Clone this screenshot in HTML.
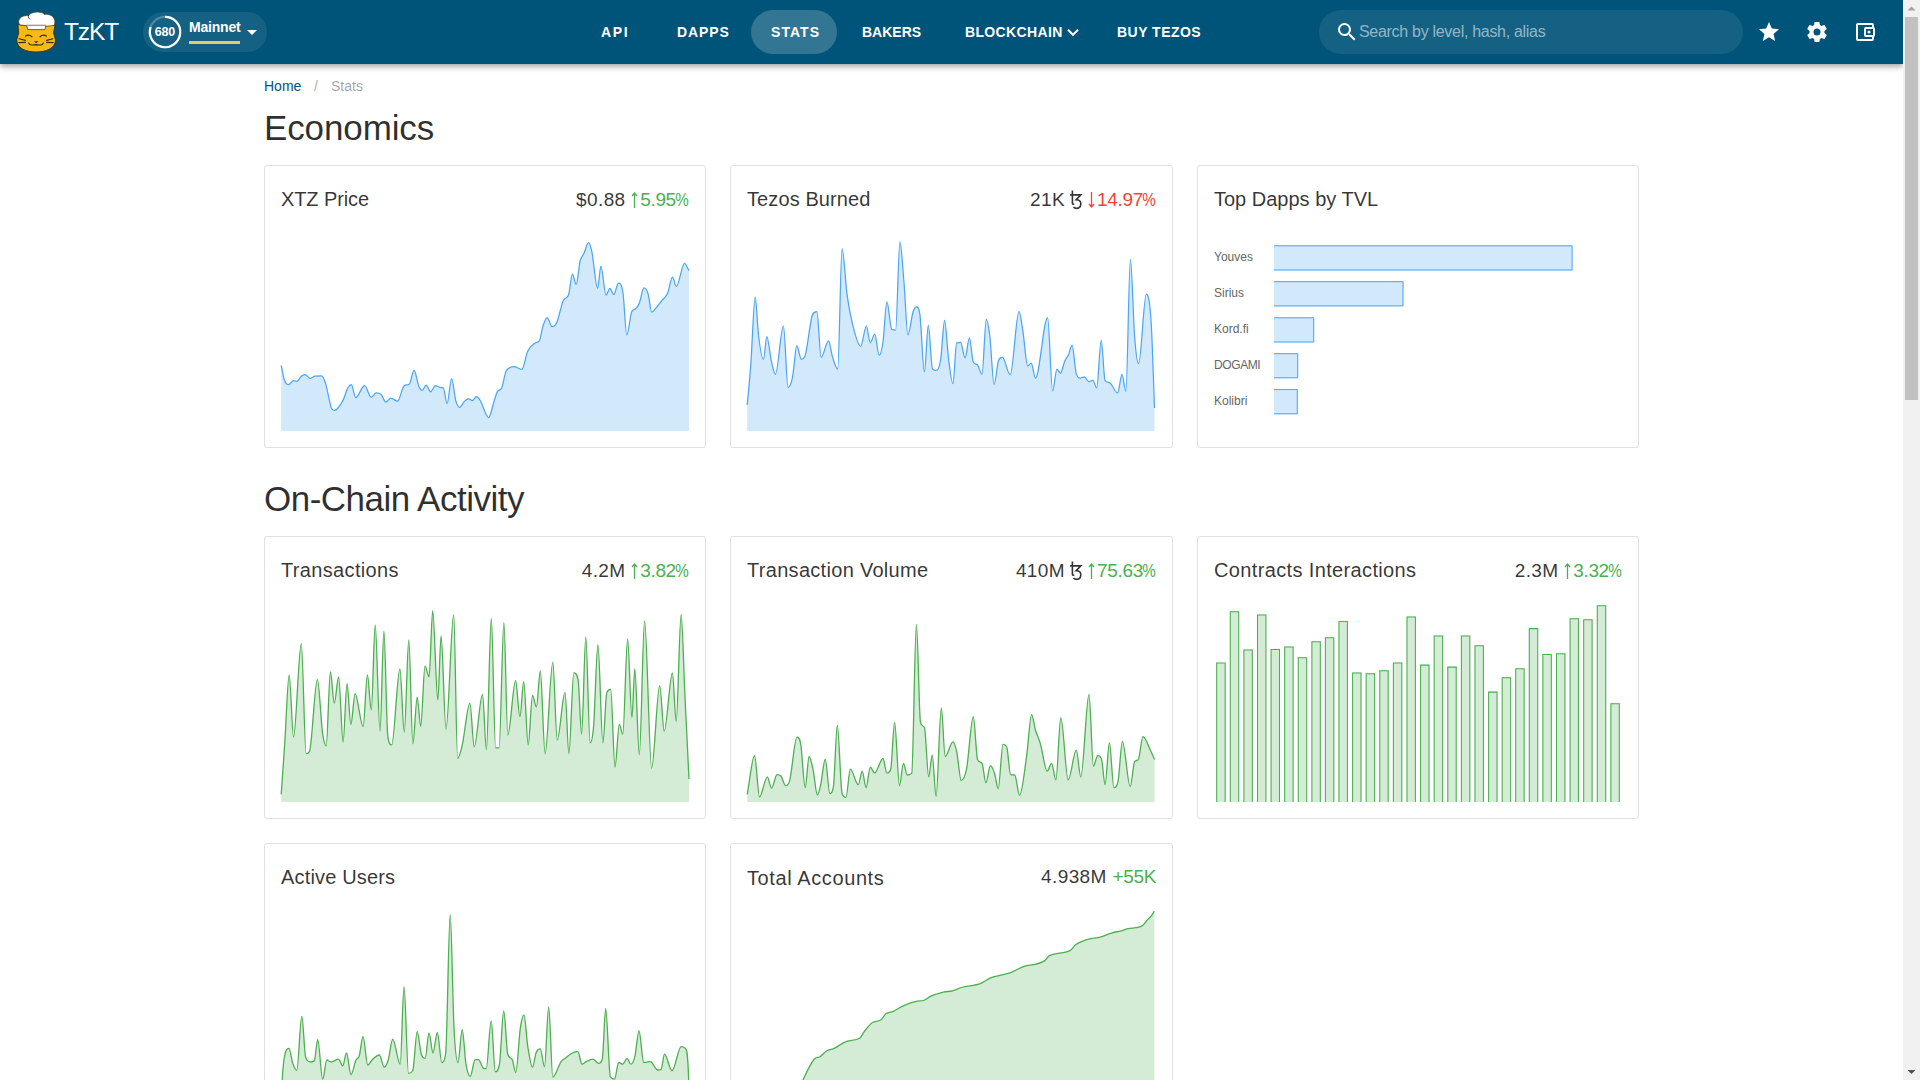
<!DOCTYPE html>
<html><head><meta charset="utf-8">
<style>
*{box-sizing:border-box;margin:0;padding:0}
html,body{width:1920px;height:1080px;overflow:hidden;background:#fff;font-family:"Liberation Sans",sans-serif;color:rgba(0,0,0,.87)}
#hdr{position:absolute;left:0;top:0;width:1903px;height:64px;background:#015479;box-shadow:0 2px 4px -1px rgba(0,0,0,.2),0 4px 5px 0 rgba(0,0,0,.14),0 1px 10px 0 rgba(0,0,0,.12);z-index:5}
.abs{position:absolute}
.nav{position:absolute;top:0;height:64px;line-height:64px;color:#fff;font-weight:bold;font-size:14px;letter-spacing:.9px;white-space:nowrap}
#sb{position:absolute;left:1903px;top:0;width:17px;height:1080px;background:#f1f1f1;z-index:6}
.card{position:absolute;border:1px solid #e0e0e0;border-radius:3px;background:#fff;width:442px}
.ct{position:absolute;left:16px;top:22px;font-size:20px;line-height:23px;color:rgba(0,0,0,.8);white-space:nowrap;letter-spacing:0}
.cv{position:absolute;right:16px;top:23px;font-size:19px;line-height:21px;color:rgba(0,0,0,.8);white-space:nowrap;letter-spacing:.4px}
.up,.dn{letter-spacing:-.35px}
.pc{font-style:normal;display:inline-block;transform:scaleX(.8);transform-origin:100% 50%;margin-left:-3.4px}
.up{color:#4caf50}
.dn{color:#f44336}
.ar{display:inline-block;vertical-align:top;width:7px;height:16px;position:relative;top:3px;margin-right:2px}
.tz{display:inline-block;vertical-align:top;width:11px;height:19px;position:relative;top:1px;margin:0 7px 0 5px}
h4{position:absolute;font-weight:normal;font-size:35px;color:rgba(0,0,0,.82);white-space:nowrap;letter-spacing:.1px}
svg{overflow:visible}
</style></head><body>
<div id="hdr">
  <svg class="abs" style="left:10px;top:6px" width="52" height="52" viewBox="0 0 1080 1080">
    <path d="M165 385 L180 560 L140 700 C140 880 330 955 540 955 C750 955 945 880 945 700 L905 560 L935 400 L700 415 L380 415 Z" fill="#f9b915" stroke="#3b2a0a" stroke-width="18" stroke-linejoin="round"/>
    <path d="M200 390 C140 300 220 190 380 200 C440 110 660 100 720 175 C860 150 980 270 915 405 L745 420 L345 410 Z" fill="#fff" stroke="#3b2a0a" stroke-width="12" stroke-linejoin="round"/>
    <path d="M345 400 H745 L725 490 H370 Z" fill="#fff" stroke="#3b2a0a" stroke-width="14" stroke-linejoin="round"/>
    <path d="M345 405 H745" stroke="#9a9a9a" stroke-width="20"/>
    <path d="M385 190 Q370 250 415 280" fill="none" stroke="#3b2a0a" stroke-width="16"/>
    <g fill="none" stroke="#3b2a0a" stroke-width="26" stroke-linecap="round">
      <path d="M325 625 Q390 580 455 640"/><path d="M625 640 Q690 580 755 625"/>
      <path d="M390 770 Q410 830 540 800 Q670 830 690 770"/>
      <path d="M190 680 L320 715"/><path d="M185 760 L320 755"/><path d="M760 715 L890 680"/><path d="M760 755 L895 760"/>
    </g>
    <path d="M500 730 H590 L545 775 Z" fill="#3b2a0a"/>
  </svg>
  <div class="abs" style="left:64px;top:0;height:64px;line-height:64px;color:#fff;font-size:24.5px;letter-spacing:-1.1px">TzKT</div>
  <div class="abs" style="left:143px;top:12px;width:124px;height:40px;border-radius:20px;background:rgba(255,255,255,.08)"></div>
  <svg class="abs" style="left:147px;top:15px" width="36" height="36" viewBox="0 0 36 36">
    <circle cx="18" cy="17" r="15.2" fill="none" stroke="rgba(255,255,255,.25)" stroke-width="2.2"/>
    <path d="M18 1.8 A15.2 15.2 0 1 1 3.6 12.2" fill="none" stroke="#fff" stroke-width="2.2"/>
    <text x="18" y="21.3" text-anchor="middle" font-family="Liberation Sans" font-weight="bold" font-size="12.5" fill="#fff" letter-spacing="-.2">680</text>
  </svg>
  <div class="abs" style="left:189px;top:19px;color:#fff;font-weight:bold;font-size:14px;line-height:16px;letter-spacing:-.2px">Mainnet</div>
  <div class="abs" style="left:189px;top:41px;width:51px;height:3px;background:#e2cb72"></div>
  <svg class="abs" style="left:240px;top:20px" width="24" height="24" viewBox="0 0 24 24"><path d="M7 10L12 15L17 10H7Z" fill="#fff"/></svg>
  <div class="nav" style="left:601px;letter-spacing:1.6px">API</div>
  <div class="nav" style="left:677px">DAPPS</div>
  <div class="abs" style="left:751px;top:10px;width:86px;height:44px;border-radius:22px;background:rgba(255,255,255,.2)"></div>
  <div class="nav" style="left:771px;letter-spacing:1.05px">STATS</div>
  <div class="nav" style="left:862px;letter-spacing:0">BAKERS</div>
  <div class="nav" style="left:965px;letter-spacing:.35px">BLOCKCHAIN</div>
  <svg class="abs" style="left:0;top:0" width="1903" height="64"><path d="M1068 29.8L1073 34.8L1078 29.8" fill="none" stroke="#fff" stroke-width="2"/></svg>
  <div class="nav" style="left:1117px;letter-spacing:.48px">BUY TEZOS</div>
  <div class="abs" style="left:1319px;top:10px;width:424px;height:44px;border-radius:22px;background:rgba(255,255,255,.08)"></div>
  <svg class="abs" style="left:1335px;top:20px" width="24" height="24" viewBox="0 0 24 24"><path d="M9.5,3A6.5,6.5 0 0,1 16,9.5C16,11.11 15.41,12.59 14.44,13.73L14.71,14H15.5L20.5,19L19,20.5L14,15.5V14.71L13.730,14.44C12.59,15.41 11.11,16 9.5,16A6.5,6.5 0 0,1 3,9.5A6.5,6.5 0 0,1 9.5,3M9.5,5C7,5 5,7 5,9.5C5,12 7,14 9.5,14C12,14 14,12 14,9.5C14,7 12,5 9.5,5Z" fill="#fff"/></svg>
  <div class="abs" style="left:1359px;top:0;height:64px;line-height:64px;font-size:16px;color:rgba(255,255,255,.55);letter-spacing:-.3px">Search by level, hash, alias</div>
  <svg class="abs" style="left:1757px;top:20px" width="24" height="24" viewBox="0 0 24 24"><path d="M12,17.27L18.18,21L16.54,13.97L22,9.24L14.81,8.62L12,2L9.19,8.62L2,9.24L7.45,13.97L5.82,21L12,17.27Z" fill="#fff"/></svg>
  <svg class="abs" style="left:1805px;top:20px" width="24" height="24" viewBox="0 0 24 24"><path d="M12,15.5A3.5,3.5 0 0,1 8.5,12A3.5,3.5 0 0,1 12,8.5A3.5,3.5 0 0,1 15.5,12A3.5,3.5 0 0,1 12,15.5M19.43,12.97C19.47,12.65 19.5,12.33 19.5,12C19.5,11.67 19.47,11.34 19.43,11L21.54,9.37C21.73,9.22 21.78,8.95 21.66,8.73L19.66,5.27C19.54,5.05 19.27,4.96 19.05,5.05L16.56,6.05C16.04,5.66 15.5,5.32 14.87,5.07L14.5,2.42C14.46,2.18 14.25,2 14,2H10C9.75,2 9.54,2.18 9.5,2.42L9.13,5.07C8.5,5.32 7.960,5.66 7.44,6.05L4.95,5.05C4.73,4.96 4.46,5.05 4.34,5.27L2.34,8.73C2.21,8.95 2.27,9.22 2.46,9.37L4.57,11C4.53,11.34 4.5,11.67 4.5,12C4.5,12.33 4.53,12.65 4.57,12.97L2.46,14.63C2.27,14.78 2.21,15.05 2.34,15.27L4.34,18.73C4.46,18.95 4.73,19.03 4.95,18.95L7.44,17.94C7.96,18.34 8.5,18.68 9.13,18.93L9.5,21.58C9.54,21.82 9.75,22 10,22H14C14.25,22 14.46,21.82 14.5,21.58L14.87,18.93C15.5,18.67 16.04,18.34 16.56,17.94L19.050,18.95C19.27,19.03 19.54,18.95 19.66,18.73L21.66,15.27C21.78,15.05 21.73,14.78 21.54,14.63L19.43,12.97Z" fill="#fff"/></svg>
  <svg class="abs" style="left:1853px;top:20px" width="24" height="24" viewBox="0 0 24 24"><path d="M5,3C3.89,3 3,3.9 3,5V19A2,2 0 0,0 5,21H19A2,2 0 0,0 21,19V16.72C21.59,16.37 22,15.74 22,15V9C22,8.26 21.59,7.63 21,7.28V5A2,2 0 0,0 19,3H5M5,5H19V7H13A2,2 0 0,0 11,9V15A2,2 0 0,0 13,17H19V19H5V5M13,9H20V15H13V9M16,10.5A1.5,1.5 0 0,0 14.5,12A1.5,1.5 0 0,0 16,13.5A1.5,1.5 0 0,0 17.5,12A1.5,1.5 0 0,0 16,10.5Z" fill="#fff"/></svg>
</div>
<div id="sb">
  <svg class="abs" style="left:0;top:0" width="17" height="1080"><path d="M4.5 10.5H12.5L8.5 6.5Z" fill="#a3a3a3"/><rect x="2" y="17" width="13" height="383" fill="#c1c1c1"/><path d="M4.5 1070H12.5L8.5 1074Z" fill="#505050"/></svg>
</div>

<div class="abs" style="left:264px;top:78px;font-size:14px;line-height:16px;color:#01547c">Home</div>
<div class="abs" style="left:314px;top:78px;font-size:14px;line-height:16px;color:rgba(0,0,0,.38)">/</div>
<div class="abs" style="left:331px;top:78px;font-size:14px;line-height:16px;color:rgba(0,0,0,.38)">Stats</div>

<h4 style="left:264px;top:108px;letter-spacing:-.12px">Economics</h4>

<div class="card" style="left:264px;top:165px;height:283px">
  <div class="ct" style="letter-spacing:-.1px">XTZ Price</div>
  <div class="cv">$0.88 <span class="up"><svg class="ar" viewBox="0 0 7 16"><path d="M3.5 16V1.2M1 4L3.5 1L6 4" fill="none" stroke="currentColor" stroke-width="1.3"/></svg>5.95<i class="pc">%</i></span></div>
</div>
<div class="card" style="left:730px;top:165px;height:283px;width:443px">
  <div class="ct" style="letter-spacing:.1px">Tezos Burned</div>
  <div class="cv">21K<svg class="tz" viewBox="0 0 11 19"><path d="M2.4 0.6V13.2Q2.4 14.3 4.3 14.2M0.1 4.9H10.8L6.2 9.7Q10.8 9.7 10.8 13.6Q10.8 18.4 6.7 18.4Q4.7 18.4 3.4 17.2" fill="none" stroke="currentColor" stroke-width="1.6"/></svg><span class="dn"><svg class="ar" viewBox="0 0 7 16"><path d="M3.5 0V14.8M1 12L3.5 15L6 12" fill="none" stroke="currentColor" stroke-width="1.3"/></svg>14.97<i class="pc">%</i></span></div>
</div>
<div class="card" style="left:1197px;top:165px;height:283px">
  <div class="ct">Top Dapps by TVL</div>
</div>

<h4 style="left:264px;top:479px;letter-spacing:-.5px">On-Chain Activity</h4>

<div class="card" style="left:264px;top:536px;height:283px">
  <div class="ct" style="letter-spacing:.34px">Transactions</div>
  <div class="cv">4.2M <span class="up"><svg class="ar" viewBox="0 0 7 16"><path d="M3.5 16V1.2M1 4L3.5 1L6 4" fill="none" stroke="currentColor" stroke-width="1.3"/></svg>3.82<i class="pc">%</i></span></div>
</div>
<div class="card" style="left:730px;top:536px;height:283px;width:443px">
  <div class="ct" style="letter-spacing:.3px">Transaction Volume</div>
  <div class="cv">410M<svg class="tz" viewBox="0 0 11 19"><path d="M2.4 0.6V13.2Q2.4 14.3 4.3 14.2M0.1 4.9H10.8L6.2 9.7Q10.8 9.7 10.8 13.6Q10.8 18.4 6.7 18.4Q4.7 18.4 3.4 17.2" fill="none" stroke="currentColor" stroke-width="1.6"/></svg><span class="up"><svg class="ar" viewBox="0 0 7 16"><path d="M3.5 16V1.2M1 4L3.5 1L6 4" fill="none" stroke="currentColor" stroke-width="1.3"/></svg>75.63<i class="pc">%</i></span></div>
</div>
<div class="card" style="left:1197px;top:536px;height:283px">
  <div class="ct" style="letter-spacing:.36px">Contracts Interactions</div>
  <div class="cv">2.3M <span class="up"><svg class="ar" viewBox="0 0 7 16"><path d="M3.5 16V1.2M1 4L3.5 1L6 4" fill="none" stroke="currentColor" stroke-width="1.3"/></svg>3.32<i class="pc">%</i></span></div>
</div>

<div class="card" style="left:264px;top:843px;height:283px">
  <div class="ct" style="letter-spacing:.17px">Active Users</div>
</div>
<div class="card" style="left:730px;top:843px;height:283px;width:443px">
  <div class="ct" style="top:23px;letter-spacing:.6px">Total Accounts</div>
  <div class="cv" style="top:22px">4.938M <span class="up">+55K</span></div>
</div>
<svg id="charts" width="1920" height="1080" style="position:absolute;left:0;top:0" viewBox="0 0 1920 1080"><path d="M281.2 365.5C282.4 370.6 283.5 377.6 284.7 380.7C286.0 384.2 287.3 384.6 288.6 384.6C290.2 384.6 291.9 380.7 293.5 380.7C294.7 380.7 295.8 381.3 297.0 381.3C298.4 381.3 299.9 377.4 301.3 376.2C302.6 375.1 303.9 374.5 305.2 374.5C306.8 374.5 308.4 378.4 310.0 378.4C311.6 378.4 313.3 376.5 314.9 376.2C317.2 375.8 319.4 375.8 321.7 375.8C323.0 375.8 324.3 379.6 325.6 383.6C327.5 389.6 329.5 403.0 331.4 407.9C332.4 410.3 333.3 410.4 334.3 410.4C337.2 410.4 340.2 405.6 343.1 400.1C344.7 397.0 346.4 390.3 348.0 387.5C349.1 385.6 350.3 384.6 351.4 384.6C352.8 384.6 354.3 397.6 355.7 397.6C358.6 397.6 361.6 385.6 364.5 385.6C366.8 385.6 369.0 397.2 371.3 397.2C372.9 397.2 374.5 392.9 376.1 392.9C377.7 392.9 379.4 392.9 381.0 394.3C382.6 395.7 384.3 402.1 385.9 402.1C387.5 402.1 389.1 398.2 390.7 398.2C393.0 398.2 395.2 401.1 397.5 401.1C399.8 401.1 402.0 386.8 404.3 385.6C405.9 384.7 407.6 385.3 409.2 384.2C410.8 383.1 412.5 370.4 414.1 370.4C415.7 370.4 417.3 382.9 418.9 386.5C420.0 389.0 421.1 390.4 422.2 390.4C423.5 390.4 424.8 385.0 426.1 385.0C427.6 385.0 429.1 391.8 430.6 391.8C432.2 391.8 433.8 385.6 435.4 385.6C437.0 385.6 438.7 387.5 440.3 387.5C441.3 387.5 442.2 387.5 443.2 387.5C444.5 387.5 445.8 403.6 447.1 403.6C448.6 403.6 450.1 378.7 451.6 378.7C453.0 378.7 454.5 396.2 455.9 401.1C457.2 405.4 458.4 407.3 459.7 407.3C461.3 407.3 463.0 402.6 464.6 401.1C465.9 399.9 467.2 398.8 468.5 398.8C469.8 398.8 471.1 400.5 472.4 400.5C473.7 400.5 475.0 396.6 476.3 396.6C477.6 396.6 478.9 398.5 480.2 400.5C483.0 404.8 485.9 417.6 488.7 417.6C490.3 417.6 492.0 407.9 493.6 403.0C494.9 399.1 496.2 393.3 497.5 391.4C498.8 389.5 500.1 390.7 501.4 388.5C503.0 385.8 504.6 373.6 506.2 371.0C508.8 366.7 511.4 366.7 514.0 366.7C516.6 366.7 519.2 369.4 521.8 369.4C523.7 369.4 525.7 355.5 527.6 351.5C530.5 345.5 533.5 344.0 536.4 342.4C537.4 341.9 538.3 342.3 539.3 340.8C540.6 338.8 541.9 329.2 543.2 325.3C544.5 321.4 545.8 317.5 547.1 317.5C548.7 317.5 550.3 326.6 551.9 326.6C553.5 326.6 555.2 325.8 556.8 322.4C559.1 317.7 561.3 303.8 563.6 300.0C565.2 297.3 566.9 299.2 568.5 295.1C569.8 291.9 571.1 274.1 572.4 274.1C573.7 274.1 574.9 284.4 576.2 284.4C577.5 284.4 578.8 266.3 580.1 261.1C581.4 255.9 582.7 256.1 584.0 253.3C585.5 250.0 587.0 242.6 588.5 242.6C589.6 242.6 590.7 246.4 591.8 251.4C593.7 260.1 595.7 288.3 597.6 288.3C598.7 288.3 599.8 266.0 600.9 266.0C602.6 266.0 604.3 295.1 606.0 295.1C607.3 295.1 608.6 288.3 609.9 288.3C611.2 288.3 612.5 294.7 613.8 294.7C615.3 294.7 616.9 283.1 618.4 283.1C619.9 283.1 621.4 283.1 622.9 292.2C624.2 300.1 625.5 335.0 626.8 335.0C628.4 335.0 630.1 315.2 631.7 311.7C633.0 308.9 634.3 309.9 635.6 308.7C636.9 307.6 638.1 306.0 639.4 302.9C640.9 299.3 642.4 287.9 643.9 287.9C645.3 287.9 646.8 289.5 648.2 294.2C649.4 298.1 650.5 312.2 651.7 312.2C653.4 312.2 655.2 308.8 656.9 306.8C658.5 304.9 660.2 302.7 661.8 300.6C663.7 298.1 665.7 297.6 667.6 293.2C669.2 289.5 670.9 277.2 672.5 277.2C673.8 277.2 675.1 286.4 676.4 286.4C679.1 286.4 681.8 263.4 684.5 263.4C686.0 263.4 687.5 268.3 689.0 270.8L689.0 431.0L281.2 431.0Z" fill="#d2e8fb" stroke="none"/><path d="M281.2 365.5C282.4 370.6 283.5 377.6 284.7 380.7C286.0 384.2 287.3 384.6 288.6 384.6C290.2 384.6 291.9 380.7 293.5 380.7C294.7 380.7 295.8 381.3 297.0 381.3C298.4 381.3 299.9 377.4 301.3 376.2C302.6 375.1 303.9 374.5 305.2 374.5C306.8 374.5 308.4 378.4 310.0 378.4C311.6 378.4 313.3 376.5 314.9 376.2C317.2 375.8 319.4 375.8 321.7 375.8C323.0 375.8 324.3 379.6 325.6 383.6C327.5 389.6 329.5 403.0 331.4 407.9C332.4 410.3 333.3 410.4 334.3 410.4C337.2 410.4 340.2 405.6 343.1 400.1C344.7 397.0 346.4 390.3 348.0 387.5C349.1 385.6 350.3 384.6 351.4 384.6C352.8 384.6 354.3 397.6 355.7 397.6C358.6 397.6 361.6 385.6 364.5 385.6C366.8 385.6 369.0 397.2 371.3 397.2C372.9 397.2 374.5 392.9 376.1 392.9C377.7 392.9 379.4 392.9 381.0 394.3C382.6 395.7 384.3 402.1 385.9 402.1C387.5 402.1 389.1 398.2 390.7 398.2C393.0 398.2 395.2 401.1 397.5 401.1C399.8 401.1 402.0 386.8 404.3 385.6C405.9 384.7 407.6 385.3 409.2 384.2C410.8 383.1 412.5 370.4 414.1 370.4C415.7 370.4 417.3 382.9 418.9 386.5C420.0 389.0 421.1 390.4 422.2 390.4C423.5 390.4 424.8 385.0 426.1 385.0C427.6 385.0 429.1 391.8 430.6 391.8C432.2 391.8 433.8 385.6 435.4 385.6C437.0 385.6 438.7 387.5 440.3 387.5C441.3 387.5 442.2 387.5 443.2 387.5C444.5 387.5 445.8 403.6 447.1 403.6C448.6 403.6 450.1 378.7 451.6 378.7C453.0 378.7 454.5 396.2 455.9 401.1C457.2 405.4 458.4 407.3 459.7 407.3C461.3 407.3 463.0 402.6 464.6 401.1C465.9 399.9 467.2 398.8 468.5 398.8C469.8 398.8 471.1 400.5 472.4 400.5C473.7 400.5 475.0 396.6 476.3 396.6C477.6 396.6 478.9 398.5 480.2 400.5C483.0 404.8 485.9 417.6 488.7 417.6C490.3 417.6 492.0 407.9 493.6 403.0C494.9 399.1 496.2 393.3 497.5 391.4C498.8 389.5 500.1 390.7 501.4 388.5C503.0 385.8 504.6 373.6 506.2 371.0C508.8 366.7 511.4 366.7 514.0 366.7C516.6 366.7 519.2 369.4 521.8 369.4C523.7 369.4 525.7 355.5 527.6 351.5C530.5 345.5 533.5 344.0 536.4 342.4C537.4 341.9 538.3 342.3 539.3 340.8C540.6 338.8 541.9 329.2 543.2 325.3C544.5 321.4 545.8 317.5 547.1 317.5C548.7 317.5 550.3 326.6 551.9 326.6C553.5 326.6 555.2 325.8 556.8 322.4C559.1 317.7 561.3 303.8 563.6 300.0C565.2 297.3 566.9 299.2 568.5 295.1C569.8 291.9 571.1 274.1 572.4 274.1C573.7 274.1 574.9 284.4 576.2 284.4C577.5 284.4 578.8 266.3 580.1 261.1C581.4 255.9 582.7 256.1 584.0 253.3C585.5 250.0 587.0 242.6 588.5 242.6C589.6 242.6 590.7 246.4 591.8 251.4C593.7 260.1 595.7 288.3 597.6 288.3C598.7 288.3 599.8 266.0 600.9 266.0C602.6 266.0 604.3 295.1 606.0 295.1C607.3 295.1 608.6 288.3 609.9 288.3C611.2 288.3 612.5 294.7 613.8 294.7C615.3 294.7 616.9 283.1 618.4 283.1C619.9 283.1 621.4 283.1 622.9 292.2C624.2 300.1 625.5 335.0 626.8 335.0C628.4 335.0 630.1 315.2 631.7 311.7C633.0 308.9 634.3 309.9 635.6 308.7C636.9 307.6 638.1 306.0 639.4 302.9C640.9 299.3 642.4 287.9 643.9 287.9C645.3 287.9 646.8 289.5 648.2 294.2C649.4 298.1 650.5 312.2 651.7 312.2C653.4 312.2 655.2 308.8 656.9 306.8C658.5 304.9 660.2 302.7 661.8 300.6C663.7 298.1 665.7 297.6 667.6 293.2C669.2 289.5 670.9 277.2 672.5 277.2C673.8 277.2 675.1 286.4 676.4 286.4C679.1 286.4 681.8 263.4 684.5 263.4C686.0 263.4 687.5 268.3 689.0 270.8" fill="none" stroke="#4ba6f2" stroke-width="1.25" stroke-linejoin="round"/><path d="M747.2 405.0C748.4 392.0 749.5 381.5 750.7 366.1C752.2 346.3 753.7 297.1 755.2 297.1C756.3 297.1 757.4 326.0 758.5 335.0C760.1 348.4 761.8 359.3 763.4 359.3C764.6 359.3 765.7 336.6 766.9 336.6C768.3 336.6 769.8 354.0 771.2 360.3C772.6 366.5 774.0 374.3 775.4 374.3C778.1 374.3 780.7 326.2 783.4 326.2C785.0 326.2 786.5 387.5 788.1 387.5C789.6 387.5 791.1 384.1 792.6 376.8C794.0 370.0 795.4 345.7 796.8 345.7C798.3 345.7 799.8 359.3 801.3 359.3C802.6 359.3 803.9 359.3 805.2 355.4C807.7 348.0 810.1 319.6 812.6 314.6C814.0 311.7 815.5 311.7 816.9 311.7C818.3 311.7 819.7 357.4 821.1 357.4C823.6 357.4 826.0 340.8 828.5 340.8C829.8 340.8 831.1 352.3 832.4 356.4C834.2 362.0 835.9 369.0 837.7 369.0C839.2 369.0 840.6 248.5 842.1 248.5C843.7 248.5 845.4 282.4 847.0 294.2C849.3 310.6 851.5 320.5 853.8 329.2C856.1 337.9 858.3 346.3 860.6 346.3C862.5 346.3 864.5 326.2 866.4 326.2C867.7 326.2 869.0 342.8 870.3 342.8C871.8 342.8 873.3 334.0 874.8 334.0C876.2 334.0 877.7 355.4 879.1 355.4C880.4 355.4 881.7 350.7 883.0 341.8C884.3 332.9 885.6 301.9 886.9 301.9C888.5 301.9 890.1 328.1 891.7 329.2C893.0 330.1 894.3 330.1 895.6 330.1C897.0 330.1 898.5 241.7 899.9 241.7C901.3 241.7 902.6 266.5 904.0 282.5C905.3 297.7 906.6 335.0 907.9 335.0C909.6 335.0 911.4 316.8 913.1 311.7C914.3 308.3 915.4 306.8 916.6 306.8C917.7 306.8 918.8 306.8 919.9 314.6C921.4 325.2 922.9 371.9 924.4 371.9C925.7 371.9 927.0 325.3 928.3 325.3C929.7 325.3 931.1 367.5 932.5 369.0C933.8 370.4 935.1 370.4 936.4 370.4C937.8 370.4 939.3 368.3 940.7 359.3C942.0 351.1 943.3 320.4 944.6 320.4C945.9 320.4 947.2 348.2 948.5 358.3C950.0 369.6 951.4 383.6 952.9 383.6C954.2 383.6 955.4 343.2 956.7 342.8C958.0 342.4 959.3 342.4 960.6 342.4C962.1 342.4 963.6 357.9 965.1 357.9C966.5 357.9 968.0 337.9 969.4 337.9C970.7 337.9 972.0 360.0 973.3 362.2C974.6 364.4 975.9 363.7 977.2 364.6C978.8 365.7 980.4 374.3 982.0 374.3C983.4 374.3 984.9 319.4 986.3 319.4C987.5 319.4 988.6 326.6 989.8 336.0C991.2 347.5 992.7 384.6 994.1 384.6C995.6 384.6 997.1 363.7 998.6 360.3C999.9 357.4 1001.1 357.4 1002.4 357.4C1005.0 357.4 1007.6 374.9 1010.2 374.9C1013.1 374.9 1016.1 311.3 1019.0 311.3C1020.3 311.3 1021.6 323.1 1022.9 331.1C1024.5 341.0 1026.1 366.1 1027.7 366.1C1028.9 366.1 1030.0 363.2 1031.2 363.2C1032.6 363.2 1034.1 378.2 1035.5 378.2C1039.5 378.2 1043.6 317.5 1047.6 317.5C1049.3 317.5 1050.9 391.0 1052.6 391.0C1054.0 391.0 1055.5 369.0 1056.9 369.0C1058.1 369.0 1059.2 373.3 1060.4 373.3C1061.8 373.3 1063.3 364.5 1064.7 361.2C1066.0 358.2 1067.3 357.3 1068.6 354.4C1069.8 351.8 1070.9 345.1 1072.1 345.1C1073.5 345.1 1074.9 369.3 1076.3 373.9C1077.6 378.2 1078.9 378.2 1080.2 378.2C1081.5 378.2 1082.8 376.8 1084.1 376.8C1085.7 376.8 1087.4 381.7 1089.0 381.7C1090.3 381.7 1091.6 380.3 1092.9 380.3C1094.2 380.3 1095.4 387.9 1096.7 387.9C1098.2 387.9 1099.7 340.4 1101.2 340.4C1102.5 340.4 1103.8 379.0 1105.1 380.7C1106.5 382.6 1108.0 382.3 1109.4 382.6C1112.1 383.2 1114.9 392.9 1117.6 392.9C1119.1 392.9 1120.5 374.3 1122.0 374.3C1123.3 374.3 1124.6 391.4 1125.9 391.4C1127.4 391.4 1128.9 259.2 1130.4 259.2C1131.8 259.2 1133.3 320.1 1134.7 337.9C1136.0 354.1 1137.3 363.6 1138.6 363.6C1141.2 363.6 1143.7 294.2 1146.3 294.2C1147.9 294.2 1149.6 297.5 1151.2 323.3C1152.3 340.7 1153.4 379.7 1154.5 407.9L1154.5 431.0L747.2 431.0Z" fill="#d2e8fb" stroke="none"/><path d="M747.2 405.0C748.4 392.0 749.5 381.5 750.7 366.1C752.2 346.3 753.7 297.1 755.2 297.1C756.3 297.1 757.4 326.0 758.5 335.0C760.1 348.4 761.8 359.3 763.4 359.3C764.6 359.3 765.7 336.6 766.9 336.6C768.3 336.6 769.8 354.0 771.2 360.3C772.6 366.5 774.0 374.3 775.4 374.3C778.1 374.3 780.7 326.2 783.4 326.2C785.0 326.2 786.5 387.5 788.1 387.5C789.6 387.5 791.1 384.1 792.6 376.8C794.0 370.0 795.4 345.7 796.8 345.7C798.3 345.7 799.8 359.3 801.3 359.3C802.6 359.3 803.9 359.3 805.2 355.4C807.7 348.0 810.1 319.6 812.6 314.6C814.0 311.7 815.5 311.7 816.9 311.7C818.3 311.7 819.7 357.4 821.1 357.4C823.6 357.4 826.0 340.8 828.5 340.8C829.8 340.8 831.1 352.3 832.4 356.4C834.2 362.0 835.9 369.0 837.7 369.0C839.2 369.0 840.6 248.5 842.1 248.5C843.7 248.5 845.4 282.4 847.0 294.2C849.3 310.6 851.5 320.5 853.8 329.2C856.1 337.9 858.3 346.3 860.6 346.3C862.5 346.3 864.5 326.2 866.4 326.2C867.7 326.2 869.0 342.8 870.3 342.8C871.8 342.8 873.3 334.0 874.8 334.0C876.2 334.0 877.7 355.4 879.1 355.4C880.4 355.4 881.7 350.7 883.0 341.8C884.3 332.9 885.6 301.9 886.9 301.9C888.5 301.9 890.1 328.1 891.7 329.2C893.0 330.1 894.3 330.1 895.6 330.1C897.0 330.1 898.5 241.7 899.9 241.7C901.3 241.7 902.6 266.5 904.0 282.5C905.3 297.7 906.6 335.0 907.9 335.0C909.6 335.0 911.4 316.8 913.1 311.7C914.3 308.3 915.4 306.8 916.6 306.8C917.7 306.8 918.8 306.8 919.9 314.6C921.4 325.2 922.9 371.9 924.4 371.9C925.7 371.9 927.0 325.3 928.3 325.3C929.7 325.3 931.1 367.5 932.5 369.0C933.8 370.4 935.1 370.4 936.4 370.4C937.8 370.4 939.3 368.3 940.7 359.3C942.0 351.1 943.3 320.4 944.6 320.4C945.9 320.4 947.2 348.2 948.5 358.3C950.0 369.6 951.4 383.6 952.9 383.6C954.2 383.6 955.4 343.2 956.7 342.8C958.0 342.4 959.3 342.4 960.6 342.4C962.1 342.4 963.6 357.9 965.1 357.9C966.5 357.9 968.0 337.9 969.4 337.9C970.7 337.9 972.0 360.0 973.3 362.2C974.6 364.4 975.9 363.7 977.2 364.6C978.8 365.7 980.4 374.3 982.0 374.3C983.4 374.3 984.9 319.4 986.3 319.4C987.5 319.4 988.6 326.6 989.8 336.0C991.2 347.5 992.7 384.6 994.1 384.6C995.6 384.6 997.1 363.7 998.6 360.3C999.9 357.4 1001.1 357.4 1002.4 357.4C1005.0 357.4 1007.6 374.9 1010.2 374.9C1013.1 374.9 1016.1 311.3 1019.0 311.3C1020.3 311.3 1021.6 323.1 1022.9 331.1C1024.5 341.0 1026.1 366.1 1027.7 366.1C1028.9 366.1 1030.0 363.2 1031.2 363.2C1032.6 363.2 1034.1 378.2 1035.5 378.2C1039.5 378.2 1043.6 317.5 1047.6 317.5C1049.3 317.5 1050.9 391.0 1052.6 391.0C1054.0 391.0 1055.5 369.0 1056.9 369.0C1058.1 369.0 1059.2 373.3 1060.4 373.3C1061.8 373.3 1063.3 364.5 1064.7 361.2C1066.0 358.2 1067.3 357.3 1068.6 354.4C1069.8 351.8 1070.9 345.1 1072.1 345.1C1073.5 345.1 1074.9 369.3 1076.3 373.9C1077.6 378.2 1078.9 378.2 1080.2 378.2C1081.5 378.2 1082.8 376.8 1084.1 376.8C1085.7 376.8 1087.4 381.7 1089.0 381.7C1090.3 381.7 1091.6 380.3 1092.9 380.3C1094.2 380.3 1095.4 387.9 1096.7 387.9C1098.2 387.9 1099.7 340.4 1101.2 340.4C1102.5 340.4 1103.8 379.0 1105.1 380.7C1106.5 382.6 1108.0 382.3 1109.4 382.6C1112.1 383.2 1114.9 392.9 1117.6 392.9C1119.1 392.9 1120.5 374.3 1122.0 374.3C1123.3 374.3 1124.6 391.4 1125.9 391.4C1127.4 391.4 1128.9 259.2 1130.4 259.2C1131.8 259.2 1133.3 320.1 1134.7 337.9C1136.0 354.1 1137.3 363.6 1138.6 363.6C1141.2 363.6 1143.7 294.2 1146.3 294.2C1147.9 294.2 1149.6 297.5 1151.2 323.3C1152.3 340.7 1153.4 379.7 1154.5 407.9" fill="none" stroke="#4ba6f2" stroke-width="1.25" stroke-linejoin="round"/><path d="M281.2 794.4C282.4 777.6 283.5 761.3 284.7 743.9C286.2 721.6 287.7 674.9 289.2 674.9C290.6 674.9 292.1 737.1 293.5 737.1C296.1 737.1 298.7 643.7 301.3 643.7C302.9 643.7 304.5 753.6 306.1 753.6C307.2 753.6 308.3 753.6 309.4 751.7C312.1 747.1 314.7 679.7 317.4 679.7C319.2 679.7 320.9 722.2 322.7 734.2C323.9 742.1 325.0 745.8 326.2 745.8C327.6 745.8 329.0 671.9 330.4 671.9C331.7 671.9 333.0 703.1 334.3 703.1C335.7 703.1 337.2 676.8 338.6 676.8C340.1 676.8 341.6 741.9 343.1 741.9C344.4 741.9 345.7 683.6 347.0 683.6C348.3 683.6 349.6 724.4 350.9 724.4C352.3 724.4 353.7 693.9 355.1 693.9C357.8 693.9 360.4 726.4 363.1 726.4C364.5 726.4 366.0 674.9 367.4 674.9C368.7 674.9 370.0 709.9 371.3 709.9C372.6 709.9 373.9 624.9 375.2 624.9C376.8 624.9 378.4 731.2 380.0 731.2C381.3 731.2 382.6 631.1 383.9 631.1C385.2 631.1 386.5 727.3 387.8 736.1C389.1 744.9 390.4 744.9 391.7 744.9C394.4 744.9 397.2 669.0 399.9 669.0C401.4 669.0 402.8 732.2 404.3 732.2C405.8 732.2 407.3 639.9 408.8 639.9C410.2 639.9 411.5 743.9 412.9 743.9C414.3 743.9 415.8 697.2 417.2 697.2C418.4 697.2 419.5 726.4 420.7 726.4C422.1 726.4 423.6 666.1 425.0 666.1C426.4 666.1 427.7 676.8 429.1 676.8C430.3 676.8 431.5 610.7 432.7 610.7C434.4 610.7 436.1 700.1 437.8 700.1C438.9 700.1 440.0 636.0 441.1 636.0C442.7 636.0 444.4 729.3 446.0 729.3C448.6 729.3 451.1 614.6 453.7 614.6C455.0 614.6 456.3 758.5 457.6 758.5C459.1 758.5 460.6 752.0 462.1 745.8C464.7 735.0 467.3 703.1 469.9 703.1C471.3 703.1 472.8 746.8 474.2 746.8C477.0 746.8 479.7 694.3 482.5 694.3C483.8 694.3 485.1 749.7 486.4 749.7C488.0 749.7 489.7 618.5 491.3 618.5C492.7 618.5 494.2 747.8 495.6 747.8C496.8 747.8 497.9 747.8 499.1 747.8C500.7 747.8 502.3 622.4 503.9 622.4C505.2 622.4 506.5 735.1 507.8 735.1C510.4 735.1 513.0 680.7 515.6 680.7C517.0 680.7 518.5 716.7 519.9 716.7C521.2 716.7 522.4 681.7 523.7 681.7C525.2 681.7 526.7 744.9 528.2 744.9C529.6 744.9 531.1 695.3 532.5 695.3C533.8 695.3 535.1 706.9 536.4 706.9C537.7 706.9 539.0 671.0 540.3 671.0C541.9 671.0 543.5 753.6 545.1 753.6C547.7 753.6 550.2 662.2 552.8 662.2C554.3 662.2 555.7 740.0 557.2 740.0C559.8 740.0 562.4 692.4 565.0 692.4C566.3 692.4 567.6 753.6 568.9 753.6C570.5 753.6 572.2 672.9 573.8 672.9C575.2 672.9 576.7 672.9 578.1 679.7C579.3 685.2 580.4 734.2 581.6 734.2C583.0 734.2 584.4 636.9 585.8 636.9C587.2 636.9 588.7 742.9 590.1 742.9C591.3 742.9 592.4 740.2 593.6 726.4C595.0 709.4 596.5 644.7 597.9 644.7C599.6 644.7 601.2 742.9 602.9 742.9C604.2 742.9 605.5 695.4 606.8 692.4C608.1 689.4 609.4 689.4 610.7 689.4C612.1 689.4 613.6 767.2 615.0 767.2C616.4 767.2 617.9 724.4 619.3 724.4C620.5 724.4 621.6 734.2 622.8 734.2C624.4 734.2 626.0 638.9 627.6 638.9C629.0 638.9 630.5 717.6 631.9 717.6C632.9 717.6 633.8 669.0 634.8 669.0C636.3 669.0 637.8 754.6 639.3 754.6C641.1 754.6 642.8 621.0 644.6 621.0C646.9 621.0 649.3 768.2 651.6 768.2C654.3 768.2 657.0 685.6 659.7 685.6C661.2 685.6 662.7 731.2 664.2 731.2C666.9 731.2 669.7 672.9 672.4 672.9C673.7 672.9 674.9 721.5 676.2 721.5C677.8 721.5 679.5 614.6 681.1 614.6C682.4 614.6 683.7 670.1 685.0 697.2C686.3 725.0 687.7 751.7 689.0 779.0L689.0 802.0L281.2 802.0Z" fill="#d4ebd5" stroke="none"/><path d="M281.2 794.4C282.4 777.6 283.5 761.3 284.7 743.9C286.2 721.6 287.7 674.9 289.2 674.9C290.6 674.9 292.1 737.1 293.5 737.1C296.1 737.1 298.7 643.7 301.3 643.7C302.9 643.7 304.5 753.6 306.1 753.6C307.2 753.6 308.3 753.6 309.4 751.7C312.1 747.1 314.7 679.7 317.4 679.7C319.2 679.7 320.9 722.2 322.7 734.2C323.9 742.1 325.0 745.8 326.2 745.8C327.6 745.8 329.0 671.9 330.4 671.9C331.7 671.9 333.0 703.1 334.3 703.1C335.7 703.1 337.2 676.8 338.6 676.8C340.1 676.8 341.6 741.9 343.1 741.9C344.4 741.9 345.7 683.6 347.0 683.6C348.3 683.6 349.6 724.4 350.9 724.4C352.3 724.4 353.7 693.9 355.1 693.9C357.8 693.9 360.4 726.4 363.1 726.4C364.5 726.4 366.0 674.9 367.4 674.9C368.7 674.9 370.0 709.9 371.3 709.9C372.6 709.9 373.9 624.9 375.2 624.9C376.8 624.9 378.4 731.2 380.0 731.2C381.3 731.2 382.6 631.1 383.9 631.1C385.2 631.1 386.5 727.3 387.8 736.1C389.1 744.9 390.4 744.9 391.7 744.9C394.4 744.9 397.2 669.0 399.9 669.0C401.4 669.0 402.8 732.2 404.3 732.2C405.8 732.2 407.3 639.9 408.8 639.9C410.2 639.9 411.5 743.9 412.9 743.9C414.3 743.9 415.8 697.2 417.2 697.2C418.4 697.2 419.5 726.4 420.7 726.4C422.1 726.4 423.6 666.1 425.0 666.1C426.4 666.1 427.7 676.8 429.1 676.8C430.3 676.8 431.5 610.7 432.7 610.7C434.4 610.7 436.1 700.1 437.8 700.1C438.9 700.1 440.0 636.0 441.1 636.0C442.7 636.0 444.4 729.3 446.0 729.3C448.6 729.3 451.1 614.6 453.7 614.6C455.0 614.6 456.3 758.5 457.6 758.5C459.1 758.5 460.6 752.0 462.1 745.8C464.7 735.0 467.3 703.1 469.9 703.1C471.3 703.1 472.8 746.8 474.2 746.8C477.0 746.8 479.7 694.3 482.5 694.3C483.8 694.3 485.1 749.7 486.4 749.7C488.0 749.7 489.7 618.5 491.3 618.5C492.7 618.5 494.2 747.8 495.6 747.8C496.8 747.8 497.9 747.8 499.1 747.8C500.7 747.8 502.3 622.4 503.9 622.4C505.2 622.4 506.5 735.1 507.8 735.1C510.4 735.1 513.0 680.7 515.6 680.7C517.0 680.7 518.5 716.7 519.9 716.7C521.2 716.7 522.4 681.7 523.7 681.7C525.2 681.7 526.7 744.9 528.2 744.9C529.6 744.9 531.1 695.3 532.5 695.3C533.8 695.3 535.1 706.9 536.4 706.9C537.7 706.9 539.0 671.0 540.3 671.0C541.9 671.0 543.5 753.6 545.1 753.6C547.7 753.6 550.2 662.2 552.8 662.2C554.3 662.2 555.7 740.0 557.2 740.0C559.8 740.0 562.4 692.4 565.0 692.4C566.3 692.4 567.6 753.6 568.9 753.6C570.5 753.6 572.2 672.9 573.8 672.9C575.2 672.9 576.7 672.9 578.1 679.7C579.3 685.2 580.4 734.2 581.6 734.2C583.0 734.2 584.4 636.9 585.8 636.9C587.2 636.9 588.7 742.9 590.1 742.9C591.3 742.9 592.4 740.2 593.6 726.4C595.0 709.4 596.5 644.7 597.9 644.7C599.6 644.7 601.2 742.9 602.9 742.9C604.2 742.9 605.5 695.4 606.8 692.4C608.1 689.4 609.4 689.4 610.7 689.4C612.1 689.4 613.6 767.2 615.0 767.2C616.4 767.2 617.9 724.4 619.3 724.4C620.5 724.4 621.6 734.2 622.8 734.2C624.4 734.2 626.0 638.9 627.6 638.9C629.0 638.9 630.5 717.6 631.9 717.6C632.9 717.6 633.8 669.0 634.8 669.0C636.3 669.0 637.8 754.6 639.3 754.6C641.1 754.6 642.8 621.0 644.6 621.0C646.9 621.0 649.3 768.2 651.6 768.2C654.3 768.2 657.0 685.6 659.7 685.6C661.2 685.6 662.7 731.2 664.2 731.2C666.9 731.2 669.7 672.9 672.4 672.9C673.7 672.9 674.9 721.5 676.2 721.5C677.8 721.5 679.5 614.6 681.1 614.6C682.4 614.6 683.7 670.1 685.0 697.2C686.3 725.0 687.7 751.7 689.0 779.0" fill="none" stroke="#4caf50" stroke-width="1.3" stroke-linejoin="round"/><path d="M747.2 794.4C749.7 781.5 752.1 755.6 754.6 755.6C756.2 755.6 757.9 797.0 759.5 797.0C762.1 797.0 764.7 776.9 767.3 776.9C768.7 776.9 770.2 788.2 771.6 788.2C773.4 788.2 775.2 774.6 777.0 774.6C778.3 774.6 779.6 774.6 780.9 776.0C782.5 777.7 784.1 785.7 785.7 785.7C787.0 785.7 788.3 785.5 789.6 780.8C792.1 772.0 794.5 737.1 797.0 737.1C798.2 737.1 799.5 737.1 800.7 743.9C802.2 752.2 803.7 787.6 805.2 787.6C806.5 787.6 807.8 756.5 809.1 756.5C810.4 756.5 811.7 763.3 813.0 769.2C814.5 775.9 815.9 795.0 817.4 795.0C818.5 795.0 819.6 789.5 820.7 784.7C822.2 778.1 823.7 759.4 825.2 759.4C826.8 759.4 828.3 793.5 829.9 793.5C831.1 793.5 832.2 793.5 833.4 786.7C834.7 779.1 836.0 725.4 837.3 725.4C838.9 725.4 840.5 788.7 842.1 793.5C843.4 797.4 844.7 797.4 846.0 797.4C847.4 797.4 848.9 769.2 850.3 769.2C853.0 769.2 855.6 784.7 858.3 784.7C859.6 784.7 860.9 771.1 862.2 771.1C863.5 771.1 864.8 787.6 866.1 787.6C867.5 787.6 868.9 767.2 870.3 767.2C871.7 767.2 873.2 773.1 874.6 773.1C877.4 773.1 880.2 758.5 883.0 758.5C884.3 758.5 885.6 773.1 886.9 773.1C888.2 773.1 889.4 773.1 890.7 769.2C892.0 765.2 893.3 722.5 894.6 722.5C896.2 722.5 897.9 785.7 899.5 785.7C900.8 785.7 902.1 763.3 903.4 763.3C904.7 763.3 906.0 775.0 907.3 775.0C908.8 775.0 910.2 775.0 911.7 773.4C913.3 771.7 914.8 624.3 916.4 624.3C917.8 624.3 919.1 717.9 920.5 722.5C921.8 726.9 923.1 725.2 924.4 727.4C925.8 729.8 927.3 776.9 928.7 776.9C929.9 776.9 931.0 755.2 932.2 755.2C933.5 755.2 934.8 796.4 936.1 796.4C937.8 796.4 939.6 707.9 941.3 707.9C942.6 707.9 943.9 756.5 945.2 756.5C947.8 756.5 950.3 741.9 952.9 741.9C954.2 741.9 955.4 746.0 956.7 751.7C958.2 758.4 959.7 780.4 961.2 780.4C963.0 780.4 964.7 777.9 966.5 769.2C968.8 758.1 971.0 716.7 973.3 716.7C974.7 716.7 976.2 756.8 977.6 759.8C979.1 762.9 980.5 761.6 982.0 763.3C983.3 764.8 984.6 782.8 985.9 782.8C987.4 782.8 988.9 765.7 990.4 765.7C991.8 765.7 993.3 769.6 994.7 774.0C995.9 777.6 997.0 788.6 998.2 788.6C999.8 788.6 1001.4 744.3 1003.0 744.3C1004.2 744.3 1005.5 744.3 1006.7 746.8C1008.0 749.4 1009.3 774.3 1010.6 774.6C1012.0 774.9 1013.3 774.8 1014.7 775.0C1016.3 775.2 1018.0 795.4 1019.6 795.4C1022.0 795.4 1024.3 772.1 1026.7 755.6C1028.3 744.2 1030.0 714.7 1031.6 714.7C1032.9 714.7 1034.2 725.9 1035.5 730.3C1037.1 735.8 1038.8 738.4 1040.4 743.9C1042.7 751.6 1044.9 771.1 1047.2 771.1C1048.7 771.1 1050.1 763.3 1051.6 763.3C1053.0 763.3 1054.5 779.9 1055.9 779.9C1057.5 779.9 1059.2 717.6 1060.8 717.6C1063.3 717.6 1065.7 779.9 1068.2 779.9C1070.9 779.9 1073.6 750.1 1076.3 750.1C1077.8 750.1 1079.3 776.9 1080.8 776.9C1083.5 776.9 1086.3 694.3 1089.0 694.3C1090.5 694.3 1091.9 766.2 1093.4 766.2C1094.8 766.2 1096.3 755.6 1097.7 755.6C1099.0 755.6 1100.3 755.6 1101.6 759.4C1102.8 762.8 1103.9 784.7 1105.1 784.7C1106.5 784.7 1108.0 742.9 1109.4 742.9C1110.9 742.9 1112.4 787.6 1113.9 787.6C1115.3 787.6 1116.7 787.6 1118.1 780.8C1119.5 773.8 1121.0 741.4 1122.4 741.4C1125.0 741.4 1127.6 786.7 1130.2 786.7C1131.7 786.7 1133.2 763.0 1134.7 761.4C1135.9 760.2 1137.0 760.8 1138.2 759.8C1139.8 758.4 1141.4 736.7 1143.0 736.7C1145.4 736.7 1147.8 744.8 1150.2 749.7C1151.6 752.6 1153.1 756.2 1154.5 759.4L1154.5 802.0L747.2 802.0Z" fill="#d4ebd5" stroke="none"/><path d="M747.2 794.4C749.7 781.5 752.1 755.6 754.6 755.6C756.2 755.6 757.9 797.0 759.5 797.0C762.1 797.0 764.7 776.9 767.3 776.9C768.7 776.9 770.2 788.2 771.6 788.2C773.4 788.2 775.2 774.6 777.0 774.6C778.3 774.6 779.6 774.6 780.9 776.0C782.5 777.7 784.1 785.7 785.7 785.7C787.0 785.7 788.3 785.5 789.6 780.8C792.1 772.0 794.5 737.1 797.0 737.1C798.2 737.1 799.5 737.1 800.7 743.9C802.2 752.2 803.7 787.6 805.2 787.6C806.5 787.6 807.8 756.5 809.1 756.5C810.4 756.5 811.7 763.3 813.0 769.2C814.5 775.9 815.9 795.0 817.4 795.0C818.5 795.0 819.6 789.5 820.7 784.7C822.2 778.1 823.7 759.4 825.2 759.4C826.8 759.4 828.3 793.5 829.9 793.5C831.1 793.5 832.2 793.5 833.4 786.7C834.7 779.1 836.0 725.4 837.3 725.4C838.9 725.4 840.5 788.7 842.1 793.5C843.4 797.4 844.7 797.4 846.0 797.4C847.4 797.4 848.9 769.2 850.3 769.2C853.0 769.2 855.6 784.7 858.3 784.7C859.6 784.7 860.9 771.1 862.2 771.1C863.5 771.1 864.8 787.6 866.1 787.6C867.5 787.6 868.9 767.2 870.3 767.2C871.7 767.2 873.2 773.1 874.6 773.1C877.4 773.1 880.2 758.5 883.0 758.5C884.3 758.5 885.6 773.1 886.9 773.1C888.2 773.1 889.4 773.1 890.7 769.2C892.0 765.2 893.3 722.5 894.6 722.5C896.2 722.5 897.9 785.7 899.5 785.7C900.8 785.7 902.1 763.3 903.4 763.3C904.7 763.3 906.0 775.0 907.3 775.0C908.8 775.0 910.2 775.0 911.7 773.4C913.3 771.7 914.8 624.3 916.4 624.3C917.8 624.3 919.1 717.9 920.5 722.5C921.8 726.9 923.1 725.2 924.4 727.4C925.8 729.8 927.3 776.9 928.7 776.9C929.9 776.9 931.0 755.2 932.2 755.2C933.5 755.2 934.8 796.4 936.1 796.4C937.8 796.4 939.6 707.9 941.3 707.9C942.6 707.9 943.9 756.5 945.2 756.5C947.8 756.5 950.3 741.9 952.9 741.9C954.2 741.9 955.4 746.0 956.7 751.7C958.2 758.4 959.7 780.4 961.2 780.4C963.0 780.4 964.7 777.9 966.5 769.2C968.8 758.1 971.0 716.7 973.3 716.7C974.7 716.7 976.2 756.8 977.6 759.8C979.1 762.9 980.5 761.6 982.0 763.3C983.3 764.8 984.6 782.8 985.9 782.8C987.4 782.8 988.9 765.7 990.4 765.7C991.8 765.7 993.3 769.6 994.7 774.0C995.9 777.6 997.0 788.6 998.2 788.6C999.8 788.6 1001.4 744.3 1003.0 744.3C1004.2 744.3 1005.5 744.3 1006.7 746.8C1008.0 749.4 1009.3 774.3 1010.6 774.6C1012.0 774.9 1013.3 774.8 1014.7 775.0C1016.3 775.2 1018.0 795.4 1019.6 795.4C1022.0 795.4 1024.3 772.1 1026.7 755.6C1028.3 744.2 1030.0 714.7 1031.6 714.7C1032.9 714.7 1034.2 725.9 1035.5 730.3C1037.1 735.8 1038.8 738.4 1040.4 743.9C1042.7 751.6 1044.9 771.1 1047.2 771.1C1048.7 771.1 1050.1 763.3 1051.6 763.3C1053.0 763.3 1054.5 779.9 1055.9 779.9C1057.5 779.9 1059.2 717.6 1060.8 717.6C1063.3 717.6 1065.7 779.9 1068.2 779.9C1070.9 779.9 1073.6 750.1 1076.3 750.1C1077.8 750.1 1079.3 776.9 1080.8 776.9C1083.5 776.9 1086.3 694.3 1089.0 694.3C1090.5 694.3 1091.9 766.2 1093.4 766.2C1094.8 766.2 1096.3 755.6 1097.7 755.6C1099.0 755.6 1100.3 755.6 1101.6 759.4C1102.8 762.8 1103.9 784.7 1105.1 784.7C1106.5 784.7 1108.0 742.9 1109.4 742.9C1110.9 742.9 1112.4 787.6 1113.9 787.6C1115.3 787.6 1116.7 787.6 1118.1 780.8C1119.5 773.8 1121.0 741.4 1122.4 741.4C1125.0 741.4 1127.6 786.7 1130.2 786.7C1131.7 786.7 1133.2 763.0 1134.7 761.4C1135.9 760.2 1137.0 760.8 1138.2 759.8C1139.8 758.4 1141.4 736.7 1143.0 736.7C1145.4 736.7 1147.8 744.8 1150.2 749.7C1151.6 752.6 1153.1 756.2 1154.5 759.4" fill="none" stroke="#4caf50" stroke-width="1.3" stroke-linejoin="round"/><path d="M281.5 1100.0C281.7 1093.3 282.0 1084.4 282.2 1080.0C283.2 1061.3 284.2 1057.2 285.2 1053.3C286.5 1048.3 287.7 1048.3 289.0 1048.3C290.2 1048.3 291.5 1059.7 292.7 1063.3C294.1 1067.2 295.4 1070.3 296.8 1070.3C298.5 1070.3 300.1 1016.3 301.8 1016.3C303.1 1016.3 304.4 1054.2 305.7 1057.5C307.5 1062.0 309.2 1062.0 311.0 1062.0C312.1 1062.0 313.2 1062.0 314.3 1060.8C315.4 1059.6 316.6 1039.7 317.7 1039.7C319.4 1039.7 321.0 1079.2 322.7 1079.2C324.1 1079.2 325.4 1060.0 326.8 1060.0C328.2 1060.0 329.6 1062.0 331.0 1062.0C333.5 1062.0 336.0 1059.2 338.5 1059.2C339.9 1059.2 341.3 1065.8 342.7 1065.8C344.0 1065.8 345.2 1053.0 346.5 1053.0C348.0 1053.0 349.5 1074.7 351.0 1074.7C352.7 1074.7 354.3 1063.4 356.0 1060.0C357.1 1057.7 358.2 1059.3 359.3 1055.8C360.5 1051.8 361.8 1036.3 363.0 1036.3C364.6 1036.3 366.1 1065.0 367.7 1065.0C369.4 1065.0 371.0 1060.7 372.7 1059.2C374.9 1057.2 377.1 1055.0 379.3 1055.0C381.0 1055.0 382.6 1067.2 384.3 1067.2C385.6 1067.2 386.9 1064.2 388.2 1060.0C389.7 1055.1 391.2 1039.2 392.7 1039.2C395.2 1039.2 397.7 1064.2 400.2 1064.2C401.5 1064.2 402.7 986.7 404.0 986.7C405.5 986.7 407.0 1073.3 408.5 1073.3C409.9 1073.3 411.3 1073.3 412.7 1070.8C414.2 1068.1 415.7 1031.7 417.2 1031.7C418.6 1031.7 419.9 1049.9 421.3 1054.2C422.6 1058.3 423.9 1058.3 425.2 1058.3C426.5 1058.3 427.7 1032.8 429.0 1032.8C430.3 1032.8 431.7 1053.0 433.0 1053.0C434.4 1053.0 435.9 1032.5 437.3 1032.5C438.8 1032.5 440.3 1062.5 441.8 1062.5C443.1 1062.5 444.4 1062.5 445.7 1053.0C447.2 1042.0 448.7 914.7 450.2 914.7C451.5 914.7 452.7 1003.2 454.0 1027.5C455.3 1053.1 456.7 1062.5 458.0 1062.5C459.4 1062.5 460.8 1029.7 462.2 1029.7C463.5 1029.7 464.7 1056.6 466.0 1064.2C467.4 1072.6 468.8 1076.3 470.2 1076.3C471.9 1076.3 473.5 1059.7 475.2 1059.7C476.3 1059.7 477.4 1059.7 478.5 1059.7C480.2 1059.7 481.8 1067.6 483.5 1068.3C484.4 1068.7 485.3 1068.7 486.2 1068.7C487.9 1068.7 489.5 1020.8 491.2 1020.8C492.6 1020.8 493.9 1071.7 495.3 1071.7C496.7 1071.7 498.1 1071.7 499.5 1064.2C500.9 1056.7 502.3 1010.8 503.7 1010.8C505.1 1010.8 506.4 1049.7 507.8 1054.2C509.2 1058.8 510.6 1057.3 512.0 1059.2C513.3 1060.9 514.5 1072.5 515.8 1072.5C517.3 1072.5 518.8 1038.4 520.3 1028.3C521.5 1020.0 522.8 1015.0 524.0 1015.0C525.3 1015.0 526.5 1038.7 527.8 1046.7C529.4 1056.7 530.9 1067.2 532.5 1067.2C533.7 1067.2 535.0 1055.5 536.2 1052.5C537.6 1049.2 538.9 1048.8 540.3 1048.8C541.7 1048.8 543.1 1066.7 544.5 1066.7C545.9 1066.7 547.3 1006.7 548.7 1006.7C550.1 1006.7 551.4 1077.0 552.8 1077.0C555.6 1077.0 558.4 1064.9 561.2 1061.3C562.6 1059.5 563.9 1059.4 565.3 1058.3C567.0 1057.0 568.6 1055.2 570.3 1054.2C572.8 1052.7 575.3 1051.3 577.8 1051.3C579.2 1051.3 580.6 1064.2 582.0 1064.2C583.4 1064.2 584.8 1062.4 586.2 1061.7C588.4 1060.6 590.6 1059.2 592.8 1059.2C594.8 1059.2 596.7 1063.3 598.7 1063.3C599.9 1063.3 601.1 1063.3 602.3 1059.2C603.4 1055.3 604.6 1008.3 605.7 1008.3C607.2 1008.3 608.8 1074.0 610.3 1076.7C611.7 1079.2 613.1 1079.2 614.5 1079.2C615.9 1079.2 617.3 1062.5 618.7 1062.5C620.1 1062.5 621.4 1064.2 622.8 1064.2C624.2 1064.2 625.6 1058.3 627.0 1058.3C628.3 1058.3 629.5 1064.2 630.8 1064.2C632.2 1064.2 633.6 1061.6 635.0 1055.8C636.3 1050.3 637.7 1030.8 639.0 1030.8C640.6 1030.8 642.1 1062.5 643.7 1062.5C645.9 1062.5 648.1 1061.7 650.3 1061.7C652.8 1061.7 655.3 1070.0 657.8 1070.0C658.9 1070.0 660.1 1070.0 661.2 1069.2C662.3 1068.4 663.4 1054.2 664.5 1054.2C667.0 1054.2 669.5 1070.8 672.0 1070.8C675.1 1070.8 678.1 1046.7 681.2 1046.7C682.6 1046.7 683.9 1047.1 685.3 1048.3C686.4 1049.3 687.6 1048.3 688.7 1080.0C688.8 1082.8 688.9 1093.3 689.0 1100.0L689.0 1100.0L281.5 1100.0Z" fill="#d4ebd5" stroke="none"/><path d="M281.5 1100.0C281.7 1093.3 282.0 1084.4 282.2 1080.0C283.2 1061.3 284.2 1057.2 285.2 1053.3C286.5 1048.3 287.7 1048.3 289.0 1048.3C290.2 1048.3 291.5 1059.7 292.7 1063.3C294.1 1067.2 295.4 1070.3 296.8 1070.3C298.5 1070.3 300.1 1016.3 301.8 1016.3C303.1 1016.3 304.4 1054.2 305.7 1057.5C307.5 1062.0 309.2 1062.0 311.0 1062.0C312.1 1062.0 313.2 1062.0 314.3 1060.8C315.4 1059.6 316.6 1039.7 317.7 1039.7C319.4 1039.7 321.0 1079.2 322.7 1079.2C324.1 1079.2 325.4 1060.0 326.8 1060.0C328.2 1060.0 329.6 1062.0 331.0 1062.0C333.5 1062.0 336.0 1059.2 338.5 1059.2C339.9 1059.2 341.3 1065.8 342.7 1065.8C344.0 1065.8 345.2 1053.0 346.5 1053.0C348.0 1053.0 349.5 1074.7 351.0 1074.7C352.7 1074.7 354.3 1063.4 356.0 1060.0C357.1 1057.7 358.2 1059.3 359.3 1055.8C360.5 1051.8 361.8 1036.3 363.0 1036.3C364.6 1036.3 366.1 1065.0 367.7 1065.0C369.4 1065.0 371.0 1060.7 372.7 1059.2C374.9 1057.2 377.1 1055.0 379.3 1055.0C381.0 1055.0 382.6 1067.2 384.3 1067.2C385.6 1067.2 386.9 1064.2 388.2 1060.0C389.7 1055.1 391.2 1039.2 392.7 1039.2C395.2 1039.2 397.7 1064.2 400.2 1064.2C401.5 1064.2 402.7 986.7 404.0 986.7C405.5 986.7 407.0 1073.3 408.5 1073.3C409.9 1073.3 411.3 1073.3 412.7 1070.8C414.2 1068.1 415.7 1031.7 417.2 1031.7C418.6 1031.7 419.9 1049.9 421.3 1054.2C422.6 1058.3 423.9 1058.3 425.2 1058.3C426.5 1058.3 427.7 1032.8 429.0 1032.8C430.3 1032.8 431.7 1053.0 433.0 1053.0C434.4 1053.0 435.9 1032.5 437.3 1032.5C438.8 1032.5 440.3 1062.5 441.8 1062.5C443.1 1062.5 444.4 1062.5 445.7 1053.0C447.2 1042.0 448.7 914.7 450.2 914.7C451.5 914.7 452.7 1003.2 454.0 1027.5C455.3 1053.1 456.7 1062.5 458.0 1062.5C459.4 1062.5 460.8 1029.7 462.2 1029.7C463.5 1029.7 464.7 1056.6 466.0 1064.2C467.4 1072.6 468.8 1076.3 470.2 1076.3C471.9 1076.3 473.5 1059.7 475.2 1059.7C476.3 1059.7 477.4 1059.7 478.5 1059.7C480.2 1059.7 481.8 1067.6 483.5 1068.3C484.4 1068.7 485.3 1068.7 486.2 1068.7C487.9 1068.7 489.5 1020.8 491.2 1020.8C492.6 1020.8 493.9 1071.7 495.3 1071.7C496.7 1071.7 498.1 1071.7 499.5 1064.2C500.9 1056.7 502.3 1010.8 503.7 1010.8C505.1 1010.8 506.4 1049.7 507.8 1054.2C509.2 1058.8 510.6 1057.3 512.0 1059.2C513.3 1060.9 514.5 1072.5 515.8 1072.5C517.3 1072.5 518.8 1038.4 520.3 1028.3C521.5 1020.0 522.8 1015.0 524.0 1015.0C525.3 1015.0 526.5 1038.7 527.8 1046.7C529.4 1056.7 530.9 1067.2 532.5 1067.2C533.7 1067.2 535.0 1055.5 536.2 1052.5C537.6 1049.2 538.9 1048.8 540.3 1048.8C541.7 1048.8 543.1 1066.7 544.5 1066.7C545.9 1066.7 547.3 1006.7 548.7 1006.7C550.1 1006.7 551.4 1077.0 552.8 1077.0C555.6 1077.0 558.4 1064.9 561.2 1061.3C562.6 1059.5 563.9 1059.4 565.3 1058.3C567.0 1057.0 568.6 1055.2 570.3 1054.2C572.8 1052.7 575.3 1051.3 577.8 1051.3C579.2 1051.3 580.6 1064.2 582.0 1064.2C583.4 1064.2 584.8 1062.4 586.2 1061.7C588.4 1060.6 590.6 1059.2 592.8 1059.2C594.8 1059.2 596.7 1063.3 598.7 1063.3C599.9 1063.3 601.1 1063.3 602.3 1059.2C603.4 1055.3 604.6 1008.3 605.7 1008.3C607.2 1008.3 608.8 1074.0 610.3 1076.7C611.7 1079.2 613.1 1079.2 614.5 1079.2C615.9 1079.2 617.3 1062.5 618.7 1062.5C620.1 1062.5 621.4 1064.2 622.8 1064.2C624.2 1064.2 625.6 1058.3 627.0 1058.3C628.3 1058.3 629.5 1064.2 630.8 1064.2C632.2 1064.2 633.6 1061.6 635.0 1055.8C636.3 1050.3 637.7 1030.8 639.0 1030.8C640.6 1030.8 642.1 1062.5 643.7 1062.5C645.9 1062.5 648.1 1061.7 650.3 1061.7C652.8 1061.7 655.3 1070.0 657.8 1070.0C658.9 1070.0 660.1 1070.0 661.2 1069.2C662.3 1068.4 663.4 1054.2 664.5 1054.2C667.0 1054.2 669.5 1070.8 672.0 1070.8C675.1 1070.8 678.1 1046.7 681.2 1046.7C682.6 1046.7 683.9 1047.1 685.3 1048.3C686.4 1049.3 687.6 1048.3 688.7 1080.0C688.8 1082.8 688.9 1093.3 689.0 1100.0" fill="none" stroke="#4caf50" stroke-width="1.3" stroke-linejoin="round"/><path d="M795.0 1100.0C797.7 1093.3 800.3 1085.8 803.0 1080.0C806.7 1071.9 810.5 1063.4 814.2 1059.2C816.1 1057.0 818.1 1057.9 820.0 1056.7C822.2 1055.3 824.5 1052.2 826.7 1050.8C829.2 1049.3 831.7 1049.4 834.2 1048.3C838.4 1046.4 842.5 1042.6 846.7 1041.3C851.1 1039.9 855.6 1041.0 860.0 1038.0C861.4 1037.1 862.8 1033.5 864.2 1031.7C867.0 1028.1 869.7 1024.2 872.5 1022.5C875.3 1020.8 878.0 1021.8 880.8 1020.0C882.5 1018.9 884.1 1015.1 885.8 1013.8C888.3 1011.8 890.8 1012.4 893.3 1011.3C896.6 1009.8 900.0 1007.3 903.3 1005.8C908.0 1003.7 912.8 1002.1 917.5 1001.2C919.4 1000.8 921.4 1001.1 923.3 1000.5C925.5 999.8 927.8 997.7 930.0 996.7C934.4 994.7 938.9 993.3 943.3 992.2C946.4 991.4 949.4 991.6 952.5 990.8C955.6 990.0 958.6 988.4 961.7 987.5C968.1 985.7 974.4 985.8 980.8 983.3C983.9 982.1 986.9 979.5 990.0 978.2C993.0 976.9 995.9 976.4 998.9 975.6C1002.6 974.6 1006.3 974.1 1010.0 972.8C1014.4 971.2 1018.9 968.3 1023.3 966.7C1030.3 964.1 1037.4 965.6 1044.4 960.9C1046.1 959.8 1047.7 956.5 1049.4 955.6C1056.3 952.0 1063.1 954.1 1070.0 950.6C1071.9 949.6 1073.7 946.2 1075.6 944.8C1079.7 941.8 1083.7 940.7 1087.8 939.4C1091.9 938.1 1095.9 938.3 1100.0 937.2C1104.1 936.1 1108.1 934.0 1112.2 932.8C1115.2 931.9 1118.1 931.7 1121.1 930.9C1123.3 930.3 1125.6 929.1 1127.8 928.6C1132.4 927.7 1137.1 928.4 1141.7 926.1C1143.7 925.1 1145.8 921.5 1147.8 919.4C1148.9 918.2 1150.0 917.5 1151.1 916.1C1152.2 914.7 1153.3 912.8 1154.4 911.1L1154.4 1100.0L795.0 1100.0Z" fill="#d4ebd5" stroke="none"/><path d="M795.0 1100.0C797.7 1093.3 800.3 1085.8 803.0 1080.0C806.7 1071.9 810.5 1063.4 814.2 1059.2C816.1 1057.0 818.1 1057.9 820.0 1056.7C822.2 1055.3 824.5 1052.2 826.7 1050.8C829.2 1049.3 831.7 1049.4 834.2 1048.3C838.4 1046.4 842.5 1042.6 846.7 1041.3C851.1 1039.9 855.6 1041.0 860.0 1038.0C861.4 1037.1 862.8 1033.5 864.2 1031.7C867.0 1028.1 869.7 1024.2 872.5 1022.5C875.3 1020.8 878.0 1021.8 880.8 1020.0C882.5 1018.9 884.1 1015.1 885.8 1013.8C888.3 1011.8 890.8 1012.4 893.3 1011.3C896.6 1009.8 900.0 1007.3 903.3 1005.8C908.0 1003.7 912.8 1002.1 917.5 1001.2C919.4 1000.8 921.4 1001.1 923.3 1000.5C925.5 999.8 927.8 997.7 930.0 996.7C934.4 994.7 938.9 993.3 943.3 992.2C946.4 991.4 949.4 991.6 952.5 990.8C955.6 990.0 958.6 988.4 961.7 987.5C968.1 985.7 974.4 985.8 980.8 983.3C983.9 982.1 986.9 979.5 990.0 978.2C993.0 976.9 995.9 976.4 998.9 975.6C1002.6 974.6 1006.3 974.1 1010.0 972.8C1014.4 971.2 1018.9 968.3 1023.3 966.7C1030.3 964.1 1037.4 965.6 1044.4 960.9C1046.1 959.8 1047.7 956.5 1049.4 955.6C1056.3 952.0 1063.1 954.1 1070.0 950.6C1071.9 949.6 1073.7 946.2 1075.6 944.8C1079.7 941.8 1083.7 940.7 1087.8 939.4C1091.9 938.1 1095.9 938.3 1100.0 937.2C1104.1 936.1 1108.1 934.0 1112.2 932.8C1115.2 931.9 1118.1 931.7 1121.1 930.9C1123.3 930.3 1125.6 929.1 1127.8 928.6C1132.4 927.7 1137.1 928.4 1141.7 926.1C1143.7 925.1 1145.8 921.5 1147.8 919.4C1148.9 918.2 1150.0 917.5 1151.1 916.1C1152.2 914.7 1153.3 912.8 1154.4 911.1" fill="none" stroke="#4caf50" stroke-width="1.3" stroke-linejoin="round"/><rect x="1216.2" y="662.5" width="9.4" height="139.5" fill="#d4ebd5"/><path d="M1216.7 802V663.0H1225.1V802" fill="none" stroke="#4caf50" stroke-width="1.05"/><rect x="1229.8" y="611.3" width="9.4" height="190.7" fill="#d4ebd5"/><path d="M1230.3 802V611.8H1238.7V802" fill="none" stroke="#4caf50" stroke-width="1.05"/><rect x="1243.4" y="649.4" width="9.4" height="152.6" fill="#d4ebd5"/><path d="M1243.9 802V649.9H1252.3V802" fill="none" stroke="#4caf50" stroke-width="1.05"/><rect x="1257.0" y="614.4" width="9.4" height="187.6" fill="#d4ebd5"/><path d="M1257.5 802V614.9H1265.9V802" fill="none" stroke="#4caf50" stroke-width="1.05"/><rect x="1270.6" y="649.0" width="9.4" height="153.0" fill="#d4ebd5"/><path d="M1271.1 802V649.5H1279.5V802" fill="none" stroke="#4caf50" stroke-width="1.05"/><rect x="1284.2" y="646.5" width="9.4" height="155.5" fill="#d4ebd5"/><path d="M1284.7 802V647.0H1293.1V802" fill="none" stroke="#4caf50" stroke-width="1.05"/><rect x="1297.8" y="657.2" width="9.4" height="144.8" fill="#d4ebd5"/><path d="M1298.3 802V657.7H1306.7V802" fill="none" stroke="#4caf50" stroke-width="1.05"/><rect x="1311.4" y="641.3" width="9.4" height="160.7" fill="#d4ebd5"/><path d="M1311.9 802V641.8H1320.3V802" fill="none" stroke="#4caf50" stroke-width="1.05"/><rect x="1324.9" y="637.2" width="9.4" height="164.8" fill="#d4ebd5"/><path d="M1325.4 802V637.7H1333.8V802" fill="none" stroke="#4caf50" stroke-width="1.05"/><rect x="1338.5" y="620.9" width="9.4" height="181.1" fill="#d4ebd5"/><path d="M1339.0 802V621.4H1347.4V802" fill="none" stroke="#4caf50" stroke-width="1.05"/><rect x="1352.1" y="672.4" width="9.4" height="129.6" fill="#d4ebd5"/><path d="M1352.6 802V672.9H1361.0V802" fill="none" stroke="#4caf50" stroke-width="1.05"/><rect x="1365.7" y="673.2" width="9.4" height="128.8" fill="#d4ebd5"/><path d="M1366.2 802V673.7H1374.6V802" fill="none" stroke="#4caf50" stroke-width="1.05"/><rect x="1379.3" y="670.2" width="9.4" height="131.8" fill="#d4ebd5"/><path d="M1379.8 802V670.7H1388.2V802" fill="none" stroke="#4caf50" stroke-width="1.05"/><rect x="1392.9" y="662.5" width="9.4" height="139.5" fill="#d4ebd5"/><path d="M1393.4 802V663.0H1401.8V802" fill="none" stroke="#4caf50" stroke-width="1.05"/><rect x="1406.5" y="616.4" width="9.4" height="185.6" fill="#d4ebd5"/><path d="M1407.0 802V616.9H1415.4V802" fill="none" stroke="#4caf50" stroke-width="1.05"/><rect x="1420.1" y="664.6" width="9.4" height="137.4" fill="#d4ebd5"/><path d="M1420.6 802V665.1H1429.0V802" fill="none" stroke="#4caf50" stroke-width="1.05"/><rect x="1433.7" y="635.4" width="9.4" height="166.6" fill="#d4ebd5"/><path d="M1434.2 802V635.9H1442.6V802" fill="none" stroke="#4caf50" stroke-width="1.05"/><rect x="1447.3" y="666.6" width="9.4" height="135.4" fill="#d4ebd5"/><path d="M1447.8 802V667.1H1456.2V802" fill="none" stroke="#4caf50" stroke-width="1.05"/><rect x="1460.9" y="635.4" width="9.4" height="166.6" fill="#d4ebd5"/><path d="M1461.4 802V635.9H1469.8V802" fill="none" stroke="#4caf50" stroke-width="1.05"/><rect x="1474.5" y="645.2" width="9.4" height="156.8" fill="#d4ebd5"/><path d="M1475.0 802V645.7H1483.4V802" fill="none" stroke="#4caf50" stroke-width="1.05"/><rect x="1488.1" y="691.6" width="9.4" height="110.4" fill="#d4ebd5"/><path d="M1488.6 802V692.1H1497.0V802" fill="none" stroke="#4caf50" stroke-width="1.05"/><rect x="1501.7" y="677.2" width="9.4" height="124.8" fill="#d4ebd5"/><path d="M1502.2 802V677.7H1510.6V802" fill="none" stroke="#4caf50" stroke-width="1.05"/><rect x="1515.2" y="668.3" width="9.4" height="133.7" fill="#d4ebd5"/><path d="M1515.7 802V668.8H1524.1V802" fill="none" stroke="#4caf50" stroke-width="1.05"/><rect x="1528.8" y="628.1" width="9.4" height="173.9" fill="#d4ebd5"/><path d="M1529.3 802V628.6H1537.7V802" fill="none" stroke="#4caf50" stroke-width="1.05"/><rect x="1542.4" y="653.9" width="9.4" height="148.1" fill="#d4ebd5"/><path d="M1542.9 802V654.4H1551.3V802" fill="none" stroke="#4caf50" stroke-width="1.05"/><rect x="1556.0" y="653.3" width="9.4" height="148.7" fill="#d4ebd5"/><path d="M1556.5 802V653.8H1564.9V802" fill="none" stroke="#4caf50" stroke-width="1.05"/><rect x="1569.6" y="618.3" width="9.4" height="183.7" fill="#d4ebd5"/><path d="M1570.1 802V618.8H1578.5V802" fill="none" stroke="#4caf50" stroke-width="1.05"/><rect x="1583.2" y="619.3" width="9.4" height="182.7" fill="#d4ebd5"/><path d="M1583.7 802V619.8H1592.1V802" fill="none" stroke="#4caf50" stroke-width="1.05"/><rect x="1596.8" y="605.3" width="9.4" height="196.7" fill="#d4ebd5"/><path d="M1597.3 802V605.8H1605.7V802" fill="none" stroke="#4caf50" stroke-width="1.05"/><rect x="1610.4" y="703.3" width="9.4" height="98.7" fill="#d4ebd5"/><path d="M1610.9 802V703.8H1619.3V802" fill="none" stroke="#4caf50" stroke-width="1.05"/><rect x="1274" y="245.3" width="298.6" height="25.2" fill="#d2e8fb"/><path d="M1274 245.8H1572.1V270.0H1274" fill="none" stroke="#4ba6f2" stroke-width="1"/><text x="1214" y="260.9" font-size="12" fill="#666" font-family="Liberation Sans">Youves</text><rect x="1274" y="281.2" width="129.5" height="25.2" fill="#d2e8fb"/><path d="M1274 281.7H1403.0V305.9H1274" fill="none" stroke="#4ba6f2" stroke-width="1"/><text x="1214" y="296.8" font-size="12" fill="#666" font-family="Liberation Sans">Sirius</text><rect x="1274" y="317.3" width="40.2" height="25.2" fill="#d2e8fb"/><path d="M1274 317.8H1313.7V342.0H1274" fill="none" stroke="#4ba6f2" stroke-width="1"/><text x="1214" y="332.9" font-size="12" fill="#666" font-family="Liberation Sans">Kord.fi</text><rect x="1274" y="353.2" width="24.2" height="25.1" fill="#d2e8fb"/><path d="M1274 353.7H1297.7V377.8H1274" fill="none" stroke="#4ba6f2" stroke-width="1"/><text x="1214" y="368.8" font-size="12" fill="#666" font-family="Liberation Sans" letter-spacing="-.4">DOGAMI</text><rect x="1274" y="389.1" width="23.8" height="25.2" fill="#d2e8fb"/><path d="M1274 389.6H1297.3V413.8H1274" fill="none" stroke="#4ba6f2" stroke-width="1"/><text x="1214" y="404.7" font-size="12" fill="#666" font-family="Liberation Sans">Kolibri</text></svg>
</body></html>
